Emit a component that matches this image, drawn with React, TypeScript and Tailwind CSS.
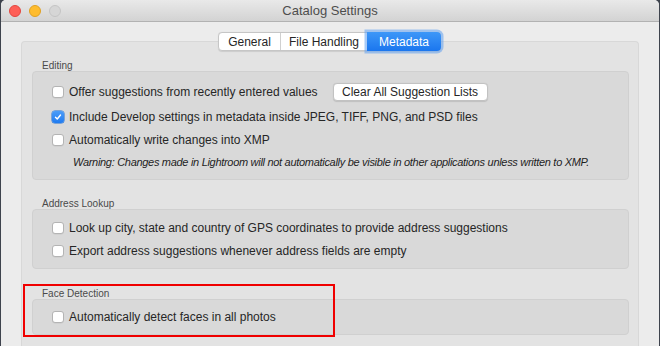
import React from "react";

const ui = { fontFamily: '"Liberation Sans", Arial, sans-serif' };
const warn = { fontFamily: '"Liberation Sans Narrow", "Liberation Sans", Arial, sans-serif' };

const Checkbox = ({ checked }: { checked?: boolean }) =>
  checked ? (
    <span className="flex h-[12px] w-[12px] shrink-0 items-center justify-center rounded-[3px] bg-gradient-to-b from-[#4a9cf8] to-[#1f7bf0] shadow-[0_0_0_0.5px_#1a6fd8]">
      <svg viewBox="0 0 12 12" className="h-[10px] w-[10px]">
        <path d="M3 6.3 L5.1 8.4 L9 3.6" fill="none" stroke="#fff" strokeWidth="1.7" strokeLinecap="round" strokeLinejoin="round" />
      </svg>
    </span>
  ) : (
    <span className="block h-[12px] w-[12px] shrink-0 rounded-[3px] border border-[#b4b4b4] bg-white shadow-[0_0.5px_0.5px_rgba(0,0,0,0.08)]" />
  );

const Row = ({ label, checked, className = "" }: { label: string; checked?: boolean; className?: string }) => (
  <div className={`flex h-[22px] items-center ${className}`}>
    <Checkbox checked={checked} />
    <span className="ml-[5px] whitespace-nowrap text-[12px] leading-none text-[#262626]">{label}</span>
  </div>
);

const Section = ({ title, children, className = "", box = "" }: { title: string; children: React.ReactNode; className?: string; box?: string }) => (
  <div className={className}>
    <div className="h-[11px] pl-[10px] text-[10px] leading-[11px] text-[#4a4a4a]">{title}</div>
    <div className={`rounded-[4px] border border-[#d0d0d0] bg-[#d9d9d9] pl-[19px] ${box}`}>{children}</div>
  </div>
);

export default function App() {
  return (
    <div className="relative flex h-[346px] w-[660px] overflow-hidden bg-[#3e434d]" style={ui}>
      <div className="ml-[1px] flex h-full w-[658px] flex-col overflow-hidden rounded-t-[5px] bg-[#ececec]">
        {/* title bar */}
        <div className="relative flex h-[22px] shrink-0 items-center justify-center border-b border-[#b2b2b2] bg-gradient-to-b from-[#e9e9e9] to-[#d3d3d3]">
          <div className="absolute left-[8px] top-[5px] flex gap-[8px]">
            <span className="h-[12px] w-[12px] rounded-full border border-[#e2463f] bg-[#fe5f57]" />
            <span className="h-[12px] w-[12px] rounded-full border border-[#dfa023] bg-[#febc2e]" />
            <span className="h-[12px] w-[12px] rounded-full border border-[#c4c4c4] bg-[#d6d6d6]" />
          </div>
          <span className="text-[13px] leading-none text-[#4d4d4d]">Catalog Settings</span>
        </div>

        {/* tabs */}
        <div className="relative z-10 mt-[10px] flex h-[19px] justify-start pl-[217px]">
          <div className="flex h-[19px] rounded-[4px] border border-[#c6c6c6] bg-white text-[12px] leading-none text-[#262626] shadow-[0_0.5px_1px_rgba(0,0,0,0.1)]">
            <div className="flex w-[62px] items-center justify-center border-r border-[#d0d0d0]">General</div>
            <div className="flex w-[86px] items-center justify-center">File Handling</div>
            <div className="-my-[1px] -mr-[1px] flex w-[74px] items-center justify-center rounded-r-[4px] bg-gradient-to-b from-[#3d97f8] to-[#1a76ee] text-white shadow-[0_0_0_2.5px_rgba(96,160,240,0.55)]">
              Metadata
            </div>
          </div>
        </div>

        {/* panel */}
        <div className="-mt-[10px] ml-[20px] flex w-[618px] flex-1 flex-col rounded-t-[4px] border border-b-0 border-[#d8d8d8] bg-[#e3e3e3] pr-[9px] pl-[10px] pt-[18px]">
          <Section title="Editing" box="pt-[9px] pb-[9px]">
            <div className="flex h-[22px] items-center">
              <Checkbox />
              <span className="ml-[5px] whitespace-nowrap text-[12px] leading-none text-[#262626]">
                Offer suggestions from recently entered values
              </span>
              <button className="ml-[15px] flex h-[18px] w-[155px] items-center justify-center rounded-[4px] border border-[#c2c2c2] bg-white text-[12px] leading-none text-[#262626] shadow-[0_0.5px_1px_rgba(0,0,0,0.12)]">
                Clear All Suggestion Lists
              </button>
            </div>
            <Row checked className="mt-[3px]" label="Include Develop settings in metadata inside JPEG, TIFF, PNG, and PSD files" />
            <Row className="mt-[1px]" label="Automatically write changes into XMP" />
            <div className="mt-[3px] flex h-[16px] items-center pl-[21px] text-[11px] italic leading-none tracking-[-0.3px] text-[#1e1e1e]" style={warn}>
              Warning: Changes made in Lightroom will not automatically be visible in other applications unless written to XMP.
            </div>
          </Section>

          <Section title="Address Lookup" className="mt-[18px]" box="pt-[7px] pb-[6px]">
            <Row label="Look up city, state and country of GPS coordinates to provide address suggestions" />
            <Row className="mt-[1px]" label="Export address suggestions whenever address fields are empty" />
          </Section>

          <Section title="Face Detection" className="mt-[19px]" box="pt-[6px] pb-[6px]">
            <Row label="Automatically detect faces in all photos" />
          </Section>
        </div>
      </div>
      <div className="w-[1px] bg-[#3e434d]" />

      {/* annotation */}
      <div className="pointer-events-none absolute left-[23px] top-[284px] h-[53px] w-[312px] border-2 border-[#f00000]" />
    </div>
  );
}
